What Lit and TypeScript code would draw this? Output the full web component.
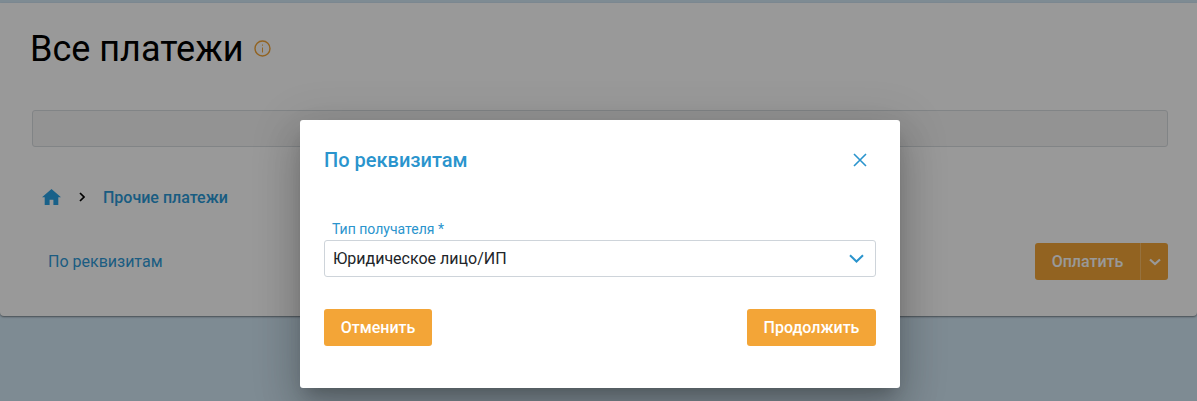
import { LitElement, html, css } from 'lit';
import { customElement } from 'lit/decorators.js';

@customElement('app-root')
export class AppRoot extends LitElement {
  static styles = css`
    :host {
      display: block;
      position: relative;
      width: 1197px;
      height: 401px;
      overflow: hidden;
      font-family: Roboto, 'Noto Sans', sans-serif;
    }
    .page {
      height: 401px;
      padding-top: 3px;
      box-sizing: border-box;
      background: #d3e8f6;
    }
    .card {
      height: 313px;
      box-sizing: border-box;
      padding: 25px 29px 0 32px;
      background: #fff;
      border-radius: 0 0 4px 4px;
      box-shadow: 0 1px 2px rgba(0, 0, 0, 0.45);
    }
    .title {
      display: flex;
      align-items: center;
      gap: 10px;
      height: 42px;
    }
    h1 {
      margin: 0 0 0 -2px;
      font-size: 36px;
      font-weight: 400;
      line-height: 42px;
      color: #000;
    }
    .info {
      display: block;
      margin-top: -1px;
    }
    .search {
      height: 37px;
      margin-top: 40px;
      box-sizing: border-box;
      border: 1px solid #d8dce0;
      border-radius: 3px;
      background: #f5f5f5;
    }
    .crumbs {
      display: flex;
      align-items: center;
      height: 20px;
      margin: 40px 0 0 10px;
      font-size: 16px;
      font-weight: 500;
      color: #2a9ad8;
    }
    .home {
      display: block;
      margin-right: 18px;
    }
    .sep {
      display: block;
      margin-right: 18px;
    }
    .row {
      display: flex;
      align-items: center;
      justify-content: space-between;
      height: 37px;
      margin-top: 36px;
    }
    .link {
      margin-left: 16px;
      font-size: 16px;
      color: #2f9ad8;
    }
    .split {
      display: flex;
      height: 37px;
      border-radius: 3px;
      background: #f3a537;
      color: #fff;
      font-size: 16px;
      font-weight: 500;
    }
    .split .pay {
      display: flex;
      align-items: center;
      justify-content: center;
      width: 105px;
      border-right: 1px solid #fbbf6a;
    }
    .split .more {
      display: flex;
      align-items: center;
      justify-content: center;
      width: 27px;
    }
    .overlay {
      position: absolute;
      inset: 0;
      background: rgba(0, 0, 0, 0.4);
    }
    .modal {
      position: absolute;
      left: 300px;
      top: 120px;
      width: 600px;
      height: 268px;
      box-sizing: border-box;
      padding: 0 24px;
      background: #fff;
      border-radius: 3px;
      box-shadow: 0 11px 15px -7px rgba(0, 0, 0, 0.2), 0 24px 38px 3px rgba(0, 0, 0, 0.14),
        0 9px 46px 8px rgba(0, 0, 0, 0.12);
    }
    .head {
      display: flex;
      align-items: center;
      justify-content: space-between;
      height: 80px;
    }
    h2 {
      margin: 0;
      font-size: 20px;
      font-weight: 500;
      color: #2a94cd;
    }
    .close {
      display: block;
      margin-right: 9px;
    }
    label {
      display: block;
      margin: 21px 0 0 8px;
      height: 19px;
      font-size: 14px;
      line-height: 17px;
      color: #2a94cd;
    }
    .select {
      display: flex;
      align-items: center;
      justify-content: space-between;
      height: 37px;
      box-sizing: border-box;
      padding: 0 11px 0 8px;
      border: 1px solid #ced4da;
      border-radius: 3px;
      font-size: 16px;
      color: #212529;
    }
    .actions {
      display: flex;
      justify-content: space-between;
      margin-top: 32px;
    }
    button {
      height: 37px;
      padding: 0;
      border: 0;
      border-radius: 3px;
      background: #f3a537;
      color: #fff;
      font: 500 16px Roboto, 'Noto Sans', sans-serif;
    }
    .cancel {
      width: 108px;
    }
    .next {
      width: 129px;
    }
  `;

  render() {
    return html`
      <div class="page">
        <div class="card">
          <div class="title">
            <h1>Все платежи</h1>
            <svg class="info" width="17" height="17" viewBox="0 0 17 17" fill="none" stroke="#f3a537">
              <circle cx="8.5" cy="8.5" r="7.500" stroke-width="1.400" />
              <path d="M8.500 7.500v5" stroke-width="1" />
              <path d="M8.500 4.500v1.200" stroke-width="1" />
            </svg>
          </div>
          <div class="search"></div>
          <div class="crumbs">
            <svg class="home" width="19" height="16" viewBox="0 0 19 16" fill="#2aa2e4">
              <path d="M9.500 0 0 8.200h2.700V16h4.900v-5.200h3.800V16h4.900V8.200H19z" />
            </svg>
            <svg class="sep" width="6" height="10" viewBox="0 0 6 10" fill="none" stroke="#000" stroke-width="1.700">
              <path d="M1 1l4 4-4 4" />
            </svg>
            Прочие платежи
          </div>
          <div class="row">
            <span class="link">По реквизитам</span>
            <div class="split">
              <span class="pay">Оплатить</span>
              <span class="more">
                <svg width="12" height="8" viewBox="0 0 12 8" fill="none" stroke="#fff" stroke-width="2.200">
                  <path d="M1 1.500 6 6l5-4.500" />
                </svg>
              </span>
            </div>
          </div>
        </div>
      </div>
      <div class="overlay"></div>
      <div class="modal">
        <div class="head">
          <h2>По реквизитам</h2>
          <svg class="close" width="14" height="14" viewBox="0 0 14 14" fill="none" stroke="#2a94cd" stroke-width="1.600">
            <path d="M1 1l12 12M13 1 1 13" />
          </svg>
        </div>
        <label>Тип получателя *</label>
        <div class="select">
          <span>Юридическое лицо/ИП</span>
          <svg width="15" height="9" viewBox="0 0 15 9" fill="none" stroke="#2a94cd" stroke-width="2">
            <path d="M1 1.200 7.500 7.500 14 1.200" />
          </svg>
        </div>
        <div class="actions">
          <button class="cancel">Отменить</button>
          <button class="next">Продолжить</button>
        </div>
      </div>
    `;
  }
}
